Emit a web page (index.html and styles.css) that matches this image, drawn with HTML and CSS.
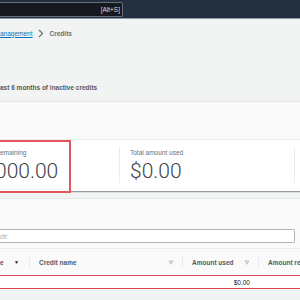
FILE: index.html
```html
<!DOCTYPE html>
<html lang="en">
<head>
    <meta charset="UTF-8">
    <meta name="viewport" content="width=device-width, initial-scale=1.0">
    <title>Credits</title>
    <link rel="stylesheet" href="styles.css">
</head>
<body>
    <header class="topbar">
        <div class="search">
            <span class="shortcut">[Alt+S]</span>
        </div>
    </header>

    <main class="page">
        <nav class="crumbs">
            <a href="#" class="crumb-link">anagement</a>
            <svg class="crumb-sep" width="6" height="9" viewBox="0 0 6 9">
                <path d="M1 1 L4.5 4.5 L1 8" fill="none" stroke="#687078" stroke-width="1.2"/>
            </svg>
            <span class="crumb-current">Credits</span>
        </nav>

        <div class="title-row">
            <a href="#" class="info-link">Info</a>
        </div>

        <p class="toggle-label">ast 6 months of inactive credits</p>

        <section class="card">
            <div class="card-head"></div>
            <div class="stats">
                <div class="stat first">
                    <div class="stat-label">emaining</div>
                    <div class="stat-value cut">000.00</div>
                </div>
                <div class="stat">
                    <div class="stat-label">Total amount used</div>
                    <div class="stat-value">$0.00</div>
                </div>
                <div class="stat"></div>
            </div>
            <!-- annotation box from the tutorial screenshot -->
            <div class="callout"></div>
        </section>

        <section class="card table-card">
            <div class="table-head">
                <div class="filter"><span class="placeholder">dit</span></div>
            </div>
            <table class="credits">
                <colgroup>
                    <col style="width: 30px">
                    <col style="width: 153px">
                    <col style="width: 76px">
                    <col style="width: 141px">
                </colgroup>
                <thead>
                    <tr>
                        <th><div class="th first-th"><span>e</span><span class="sort">&#9660;</span></div></th>
                        <th><div class="th"><span>Credit name</span><span class="sort muted">&#9661;</span></div></th>
                        <th><div class="th"><span>Amount used</span><span class="sort muted">&#9661;</span></div></th>
                        <th><div class="th last"><span>Amount remaining</span></div></th>
                    </tr>
                </thead>
                <tbody>
                    <tr class="marked">
                        <td></td>
                        <td></td>
                        <td class="num">$0.00</td>
                        <td></td>
                    </tr>
                </tbody>
            </table>
        </section>
    </main>
</body>
</html>
```

FILE: styles.css
```css
body {
    margin: 0;
    padding: 0;
    background-color: #f2f3f3;
    font-family: "Liberation Sans", Arial, sans-serif;
    color: #16191f;
    overflow: hidden;
}

/* dark console bar */
.topbar {
    height: 18px;
    background-color: #232f3e;
    border-bottom: 1px solid #8d99a8;
    display: flex;
    align-items: flex-start;
}

.search {
    width: 120px;
    height: 13px;
    margin-top: 2px;
    background-color: #16191f;
    border: 1px solid #687078;
    border-left: none;
    border-radius: 0 2px 2px 0;
    display: flex;
    align-items: center;
    justify-content: flex-end;
    padding-right: 2px;
}

.shortcut {
    font-size: 6.5px;
    color: #d5dbdb;
}

.page {
    padding-top: 8px;
}

.crumbs {
    display: flex;
    align-items: center;
    gap: 5px;
    height: 12px;
    font-size: 6.5px;
}

.crumb-link {
    color: #0073bb;
    text-decoration: underline;
}

.crumb-sep {
    margin: 0 1px 0 0;
}

.crumb-current {
    color: #687078;
    font-weight: bold;
}

.title-row {
    height: 20px;
    margin-top: 9px;
    display: flex;
    align-items: center;
}

.info-link {
    margin-left: -12px;
    font-size: 6.5px;
    font-weight: bold;
    color: #0073bb;
    text-decoration: none;
}

.toggle-label {
    margin: 14px 0 0 0;
    height: 12px;
    line-height: 12px;
    font-size: 6.5px;
    font-weight: bold;
    color: #545b64;
}

/* cards */
.card {
    position: relative;
    margin-top: 7px;
    background-color: #ffffff;
    border-top: 1px solid #e4e7e7;
    box-shadow: 0 1px 1px 0 rgba(0, 28, 36, 0.3), 1px 1px 1px 0 rgba(0, 28, 36, 0.15);
}

.card-head {
    height: 37px;
    background-color: #fafafa;
    border-bottom: 1px solid #eaeded;
}

.stats {
    display: grid;
    grid-template-columns: 119px 175px 1fr;
    padding: 7px 0 8px 0;
}

.stat {
    padding: 1px 0 0 10px;
    border-left: 1px solid #eaeded;
}

.stat.first {
    border-left: none;
    padding-left: 0;
}

.stat-label {
    height: 10px;
    line-height: 10px;
    font-size: 6.5px;
    color: #687078;
}

.stat-value {
    height: 24px;
    line-height: 24px;
    margin-top: 1px;
    font-family: Roboto, "Liberation Sans", sans-serif;
    font-weight: 300;
    font-size: 21px;
    color: #3d4349;
}

.stat-value.cut {
    margin-left: -5px;
}

.callout {
    position: absolute;
    left: -5px;
    top: 38px;
    width: 72px;
    height: 49px;
    border: 2px solid #e3545c;
}

/* table card */
.table-card {
    margin-top: 7px;
}

.table-head {
    background-color: #fafafa;
    padding: 30px 5px 5px 0;
}

.filter {
    height: 12px;
    background-color: #ffffff;
    border: 1px solid #aab7b8;
    border-left: none;
    border-radius: 0 2px 2px 0;
    display: flex;
    align-items: center;
}

.placeholder {
    font-size: 6.5px;
    color: #aab7b8;
    font-style: italic;
}

.credits {
    table-layout: fixed;
    width: 400px;
    border-collapse: collapse;
    font-size: 6.5px;
}

.credits th {
    padding: 7px 0;
    background-color: #fafafa;
    border-top: 1px solid #eaeded;
    font-weight: bold;
    color: #545b64;
    text-align: left;
}

.th {
    height: 12px;
    display: flex;
    align-items: center;
    justify-content: space-between;
    padding: 0 9px 0 9px;
    border-right: 1px solid #eaeded;
    white-space: nowrap;
}

.th.first-th {
    padding-left: 0;
    padding-right: 10px;
}

.th.last {
    border-right: none;
}

.sort {
    font-size: 5px;
    color: #16191f;
}

.sort.muted {
    color: #879596;
}

.credits td {
    height: 12px;
    padding: 0 9px;
    border-top: 1px solid #e3454d;
    border-bottom: 1px solid #e3454d;
    background-color: #ffffff;
    color: #16191f;
}

.credits td.num {
    text-align: right;
}
```
